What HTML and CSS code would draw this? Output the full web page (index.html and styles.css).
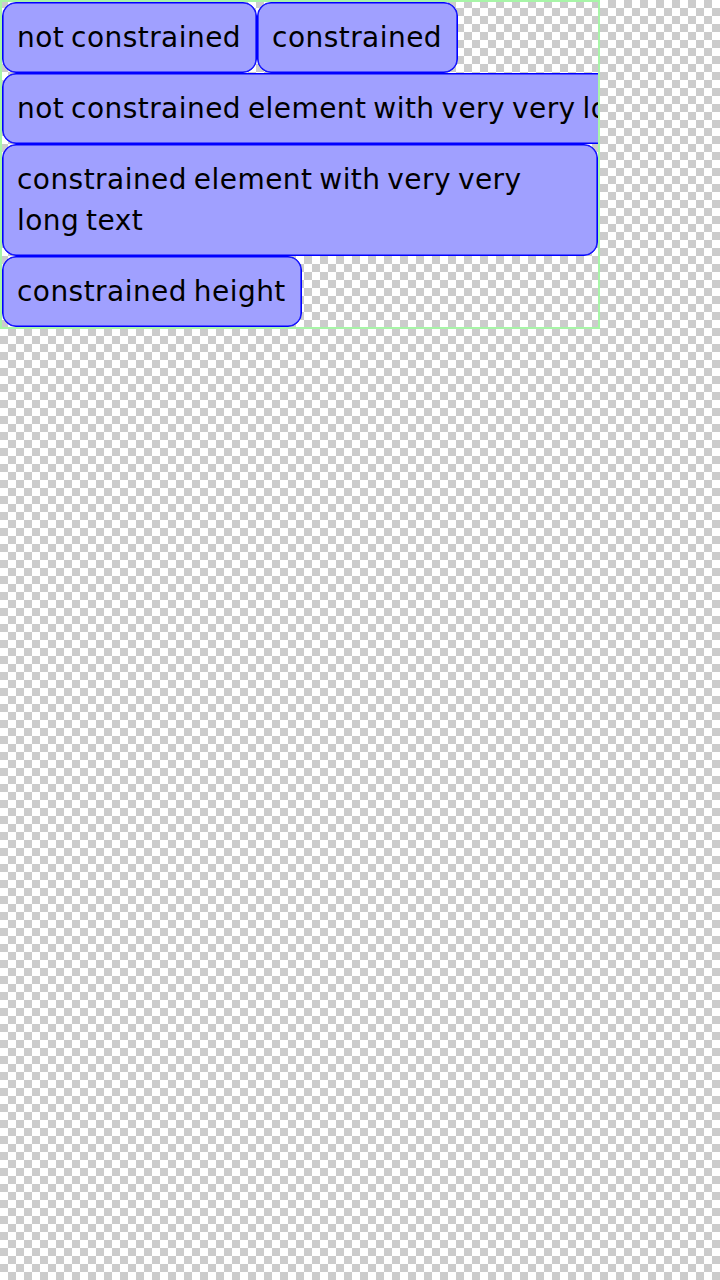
FILE: index.html
```html
<!DOCTYPE html>
<html>
<head>
<meta charset="utf-8">
<link rel="stylesheet" href="styles.css">
</head>
<body>
<div class="frame">
  <div class="row">
    <div class="item">not constrained</div>
    <div class="item">constrained</div>
  </div>
  <div class="item nowrap">not constrained element with very very long text</div>
  <div class="item wrap">constrained element with very very long text</div>
  <div class="item">constrained height</div>
</div>
</body>
</html>
```
FILE: styles.css
```css
html {
  background: repeating-conic-gradient(#ffffff 0 25%, #cccccc 0 50%) 0 0 / 16px 16px;
}
body {
  margin: 0;
  min-height: 1280px;
  font-family: "DejaVu Sans", sans-serif;
  font-size: 28px;
  line-height: 41px;
  letter-spacing: 0.45px;
  word-spacing: -2.5px;
  color: #000;
}
.frame {
  width: 596px;
  border: 2px solid #a8f5a8;
  display: flex;
  flex-direction: column;
  align-items: flex-start;
  overflow: hidden;
}
.row {
  display: flex;
}
.item {
  background: #a0a0ff;
  border: 1px solid #0000ff;
  box-shadow: inset 0 0 0 0.6px #0000ff;
  border-radius: 14px;
  padding: 14px 15px 14px 14px;
  white-space: nowrap;
  flex-shrink: 0;
}
.item.wrap {
  white-space: normal;
  box-sizing: border-box;
  width: 100%;
}
```
